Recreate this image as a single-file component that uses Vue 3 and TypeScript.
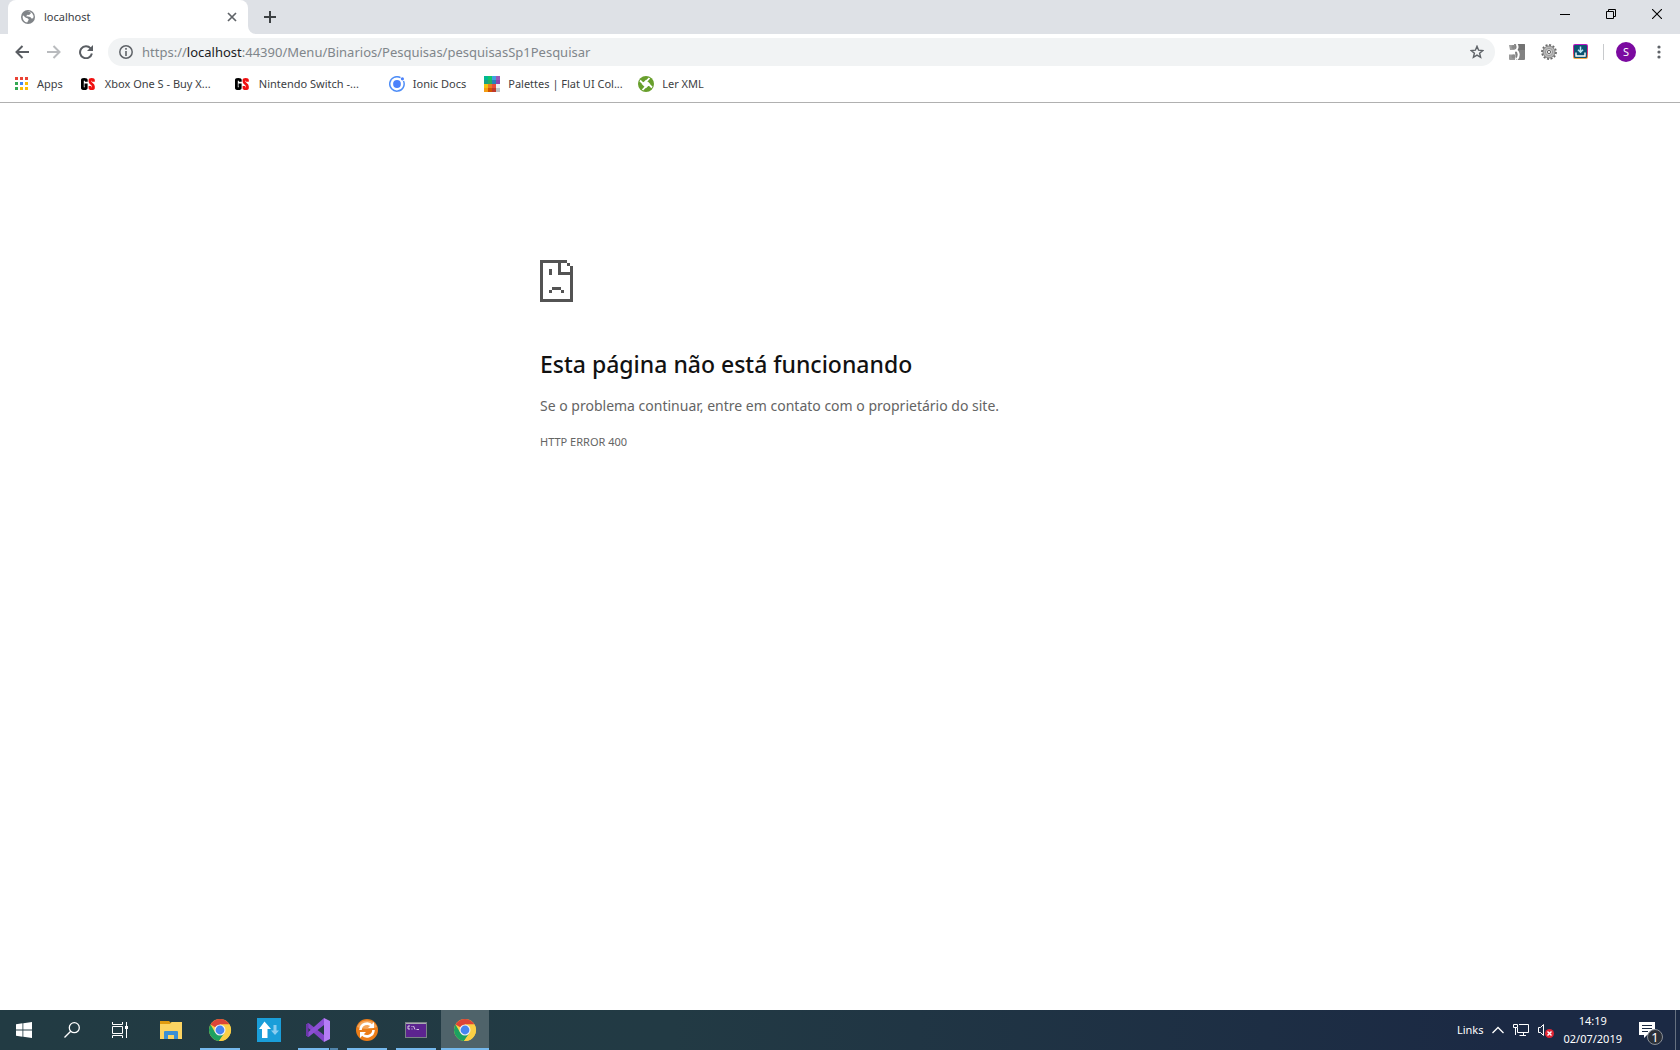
<script setup lang="ts">
interface Bookmark {
  label: string
  icon: 'apps' | 'gs' | 'ionic' | 'palette' | 'xml'
  capped: boolean
}

const bookmarks: Bookmark[] = [
  { label: 'Apps', icon: 'apps', capped: false },
  { label: 'Xbox One S - Buy X...', icon: 'gs', capped: true },
  { label: 'Nintendo Switch -...', icon: 'gs', capped: true },
  { label: 'Ionic Docs', icon: 'ionic', capped: false },
  { label: 'Palettes | Flat UI Col...', icon: 'palette', capped: true },
  { label: 'Ler XML', icon: 'xml', capped: false },
]

const appDots = ['#ea4335', '#ea4335', '#ea4335', '#34a853', '#4285f4', '#fbbc05', '#34a853', '#fbbc05', '#fbbc05']

const paletteCells = [
  '#00b894', '#10c469', '#3fa0e0', '#9b59b6',
  '#16a085', '#27ae60', '#2980b9', '#8e44ad',
  '#f1c40f', '#e67e22', '#e74c3c', '#ecf0f1',
  '#f39c12', '#d35400', '#c0392b', '#bdc3c7',
]
</script>

<template>
  <div class="desktop">
    <header class="browser">
      <div class="tabstrip">
        <div class="tab">
          <svg class="favicon" width="14" height="14" viewBox="0 0 14 14">
            <circle cx="7" cy="7" r="7" fill="#808488" />
            <path d="M2 5.2 4.8 7.800 6.500 8.200 7.800 9.500 6.200 12.600C3.500 12.300 1.700 9.800 1.600 7ZM6 1.600 9.300 1.900 9.800 3.500 8 5 6.500 4.800 5 6.200 7 6.500 9.300 7 10.500 8.600 12.200 8.200 12.600 6 11.200 3.200 8.800 1.500Z" fill="#fff" />
          </svg>
          <span class="tab-title">localhost</span>
          <button class="bare tab-close" aria-label="Fechar guia">
            <svg width="10" height="10" viewBox="0 0 10 10"><path d="M1 1 9 9M9 1 1 9" stroke="#5f6368" stroke-width="1.700" /></svg>
          </button>
          <svg class="tab-foot" width="8" height="8" viewBox="0 0 8 8"><path d="M0 0A8 8 0 0 0 8 8H0Z" fill="#fff" /></svg>
        </div>
        <button class="bare new-tab" aria-label="Nova guia">
          <svg width="12" height="12" viewBox="0 0 12 12"><path d="M6 0V12M0 6H12" stroke="#3c4043" stroke-width="2" /></svg>
        </button>
        <div class="window-controls">
          <button class="bare" aria-label="Minimizar"><svg width="10" height="10" viewBox="0 0 10 10"><path d="M0 5.500H10" stroke="#000" /></svg></button>
          <button class="bare" aria-label="Restaurar"><svg width="10" height="10" viewBox="0 0 10 10" fill="none" stroke="#000"><path d="M.5 2.500H7.500V9.500H.5ZM2.500 2.500V.5H9.500V7.500H7.500" /></svg></button>
          <button class="bare" aria-label="Fechar"><svg width="10" height="10" viewBox="0 0 10 10"><path d="M0 0 10 10M10 0 0 10" stroke="#000" stroke-width="1.100" /></svg></button>
        </div>
      </div>

      <div class="toolbar">
        <nav class="nav">
          <button class="bare" aria-label="Voltar"><svg width="14" height="14" viewBox="0 0 14 14" fill="none" stroke="#5a5e63" stroke-width="2"><path d="M14 7H1.500M7.500 1 1.500 7 7.500 13" /></svg></button>
          <button class="bare" aria-label="Avançar"><svg width="14" height="14" viewBox="0 0 14 14" fill="none" stroke="#b9bbbe" stroke-width="2"><path d="M0 7H12.500M6.500 1 12.500 7 6.500 13" /></svg></button>
          <button class="bare" aria-label="Recarregar"><svg width="14" height="14" viewBox="0 0 14 14"><path d="M11.600 3.300A6 6 0 1 0 12.900 8.600" fill="none" stroke="#5a5e63" stroke-width="2" /><path d="M14 0V6H8Z" fill="#5a5e63" /></svg></button>
        </nav>
        <div class="omnibox">
          <svg width="14" height="14" viewBox="0 0 14 14"><circle cx="7" cy="7" r="6.200" fill="none" stroke="#5f6368" stroke-width="1.500" /><path d="M7 3V4.700M7 6V11" stroke="#5f6368" stroke-width="1.600" /></svg>
          <span class="url">https://<b>localhost</b>:44390/Menu/Binarios/Pesquisas/pesquisasSp1Pesquisar</span>
          <button class="bare" aria-label="Favoritar"><svg width="14" height="14" viewBox="0 0 14 14"><path d="M7 1.300 8.600 5.200 12.800 5.500 9.600 8.200 10.600 12.300 7 10.100 3.400 12.300 4.400 8.200 1.200 5.500 5.400 5.200Z" fill="none" stroke="#5f6368" stroke-width="1.400" /></svg></button>
        </div>
        <div class="extensions">
          <svg width="16" height="16" viewBox="0 0 16 16">
            <path d="M5 0H15Q16 0 16 1V15Q16 16 15 16H7Z" fill="#828282" /><path d="M9 0H15Q16 0 16 1V6H9Z" fill="#727272" />
            <path d="M0 1H6V6H1Z" fill="#a0a0a0" /><path d="M0 10.500H6V16H1Q0 16 0 15Z" fill="#9a9a9a" />
            <path d="M7.500 0C9 2 9 4.500 7 6 10.500 8 10.500 13 7.500 15.500M0 8C3 8.500 5 8 6.500 6.500" fill="none" stroke="#fff" stroke-width="2" />
            <circle cx="4.500" cy="3" r="2" fill="#8a8a8a" /><circle cx="4.500" cy="12.500" r="2" fill="#8a8a8a" />
          </svg>
          <svg width="16" height="16" viewBox="0 0 16 16">
            <circle cx="8" cy="8" r="6.900" fill="none" stroke="#6a6a6a" stroke-width="2" stroke-dasharray="2 1.600" />
            <circle cx="8" cy="8" r="6" fill="#b8b8b8" stroke="#858585" /><circle cx="8" cy="8" r="3.600" fill="#d4d4d4" stroke="#9a9a9a" /><circle cx="8" cy="8" r="1.600" fill="#fff" stroke="#666" />
          </svg>
          <svg width="16" height="16" viewBox="0 0 16 16">
            <defs><linearGradient id="insta" x1="0" y1="0" x2="0" y2="1"><stop offset="0" stop-color="#b414c8" /><stop offset=".6" stop-color="#e03a70" /><stop offset="1" stop-color="#fbb03b" /></linearGradient></defs>
            <rect width="15" height="15" rx="2" fill="url(#insta)" /><rect x="1" y="1" width="13" height="13" rx="1" fill="#0c5272" />
            <path d="M3 8.500V12H12V8.500" fill="none" stroke="#fff" stroke-width="1.400" /><path d="M7.500 2.500V8M5 5.800 7.500 8.300 10 5.800" fill="none" stroke="#b9e6f5" stroke-width="1.500" />
          </svg>
        </div>
        <span class="divider"></span>
        <button class="bare avatar" aria-label="Perfil">S</button>
        <button class="bare menu" aria-label="Menu"><svg width="4" height="14" viewBox="0 0 4 14" fill="#5f6368"><circle cx="2" cy="2" r="1.600" /><circle cx="2" cy="7" r="1.600" /><circle cx="2" cy="12" r="1.600" /></svg></button>
      </div>

      <nav class="bookmarks">
        <a v-for="mark in bookmarks" :key="mark.label" href="#" class="bookmark" :class="{ capped: mark.capped }">
          <svg v-if="mark.icon === 'apps'" width="14" height="14" viewBox="0 0 14 14">
            <rect v-for="(color, i) in appDots" :key="i" :x="(i % 3) * 5" :y="Math.floor(i / 3) * 5" width="3" height="3" :fill="color" />
          </svg>
          <svg v-else-if="mark.icon === 'gs'" width="16" height="16" viewBox="0 0 16 16" fill="none" stroke-width="2.800">
            <path d="M5.300 5.800V4Q5.300 3.300 3.300 3.300T1.400 4V12Q1.400 12.700 3.300 12.700T5.200 12V9H3.500" stroke="#000" />
            <path d="M12.400 5.800V4Q12.400 3.300 10.700 3.300T9 4V5.500C9 8 12.400 7.800 12.400 10.400V12Q12.400 12.700 10.700 12.700T9 12V10" stroke="#f01010" />
          </svg>
          <svg v-else-if="mark.icon === 'ionic'" width="16" height="16" viewBox="0 0 16 16">
            <path d="M11.500 1.700A7.200 7.200 0 1 0 14.500 5" fill="none" stroke="#4f8ef7" stroke-width="1.500" /><circle cx="8" cy="8" r="3.900" fill="#4c82fb" /><circle cx="13.400" cy="2.800" r="1.600" fill="#4c82fb" />
          </svg>
          <svg v-else-if="mark.icon === 'palette'" width="16" height="16" viewBox="0 0 16 16" shape-rendering="crispEdges">
            <rect v-for="(color, i) in paletteCells" :key="i" :x="(i % 4) * 4" :y="Math.floor(i / 4) * 4" width="4" height="4" :fill="color" />
          </svg>
          <svg v-else width="16" height="16" viewBox="0 0 16 16">
            <circle cx="8" cy="8" r="8" fill="#689f2c" />
            <path d="M8 5 11 8 8 11 5 8ZM2 4.500 5 7.500M8.500 5.200 11.500 2M11 8.500 14 11.500M7.500 10.800 4.500 14" fill="#fff" stroke="#fff" stroke-width="1.800" />
          </svg>
          <span>{{ mark.label }}</span>
        </a>
      </nav>
    </header>

    <main class="page">
      <div class="error">
        <svg width="33" height="42" viewBox="0 0 11 14" shape-rendering="crispEdges" fill="#535353">
          <path d="M0 0H9V1H7V4H10V2H11V14H0ZM1 1V13H10V5H6V1ZM9 1H10V2H9ZM3 3H4V5H3ZM4 9H7V10H4ZM3 10H4V11H3ZM7 10H8V11H7Z" fill-rule="evenodd" />
        </svg>
        <h1>Esta página não está funcionando</h1>
        <p>Se o problema continuar, entre em contato com o proprietário do site.</p>
        <div class="code">HTTP ERROR 400</div>
      </div>
    </main>

    <footer class="taskbar">
      <div class="system">
        <button class="bare task" aria-label="Iniciar"><svg width="16" height="16" viewBox="0 0 16 16" fill="#fff"><path d="M0 2.200 6.500 1.300V7.500H0ZM7.300 1.200 16 0V7.500H7.300ZM0 8.400H6.500V14.700L0 13.800ZM7.300 8.400H16V16L7.300 14.800Z" /></svg></button>
        <button class="bare task" aria-label="Pesquisar"><svg width="16" height="16" viewBox="0 0 16 16" fill="none" stroke="#fff" stroke-width="1.300"><circle cx="10.300" cy="5.700" r="5" /><path d="M6.700 9.300.5 15.500" /></svg></button>
        <button class="bare task" aria-label="Visão de tarefas"><svg width="16" height="16" viewBox="0 0 16 16" fill="none" stroke="#fff"><path d="M.5 4.500H10.500V11.500H.5ZM.5 0V2.500H10.500V0M.5 16V13.500H10.500V16M14.500 0V16" /><path d="M13 4H16V7H13Z" fill="#fff" stroke="none" /></svg></button>
      </div>
      <div class="apps-list">
        <button class="bare task" aria-label="Explorador de Arquivos">
          <svg width="24" height="24" viewBox="0 0 24 24"><path d="M1 3H10L12 5H22V8H1Z" fill="#e09b10" /><path d="M1 6H11L12.500 4H23V21H1Z" fill="#fcd462" /><path d="M5 21V14Q5 13 6 13H18Q19 13 19 14V21H15V17H9V21Z" fill="#3b8fd4" /></svg>
        </button>
        <button class="bare task running" aria-label="Google Chrome">
          <svg width="24" height="24" viewBox="0 0 48 48"><circle cx="24" cy="24" r="22" fill="#fbcf45" /><path d="M24 24 5 13A22 22 0 0 1 43 13H24Z" fill="#dc4437" /><path d="M5 13A22 22 0 0 0 22 46L33.500 29.500 24 24 14.500 29.500Z" fill="#1da160" /><path d="M24 13H43A22 22 0 0 1 22 46L33.500 29.500Z" fill="#fbcf45" /><circle cx="24" cy="24" r="11" fill="#f1f1f1" /><circle cx="24" cy="24" r="8.800" fill="#4684f0" /></svg>
        </button>
        <button class="bare task" aria-label="Sincronizador">
          <svg width="24" height="24" viewBox="0 0 24 24"><path d="M0 0H24V24H0Z" fill="#1a9ed9" /><path d="M7.500 3.500 14 11H10.500V20H5V11H2Z" fill="#fff" /><path d="M16.500 7H19.500V12.500H22L18 17 14 12.500H16.500Z" fill="#8bcdf0" /></svg>
        </button>
        <button class="bare task running grouped" aria-label="Visual Studio">
          <svg width="24" height="24" viewBox="0 0 24 24"><path d="M0 6.500 2.500 5 18 17V24L0 8Z" fill="#8246c8" /><path d="M0 17.500 2.500 19 18 7V0L0 16Z" fill="#8c4fd5" /><path d="M0 6.500 2.500 5V19L0 17.500Z" fill="#6b36aa" /><path d="M18 0 24 3V21L18 24Z" fill="#b57df5" /></svg>
        </button>
        <button class="bare task running" aria-label="Atualizador">
          <svg width="24" height="24" viewBox="0 0 24 24"><circle cx="12" cy="12" r="11" fill="#ec7d18" /><path d="M2 9A11 11 0 0 1 22 9Q12 13 2 9Z" fill="#f5a55a" /><path d="M5.500 12A6.500 6.500 0 0 1 17 8M18.500 12A6.500 6.500 0 0 1 7 16" fill="none" stroke="#fff" stroke-width="2.600" /><path d="M19 4V10H13ZM5 20V14H11Z" fill="#fff" /></svg>
        </button>
        <button class="bare task running" aria-label="Prompt de comando">
          <svg width="24" height="24" viewBox="0 0 24 24"><rect x="1.500" y="4.500" width="21" height="15" fill="#5c2490" stroke="#7b8388" /><path d="M2 5.500H22" stroke="#a9adb1" /><path d="M6 8H4V11H6M8 8V9M8 10.500V11.500M9.500 8 11 11.500M12.500 11.500H15" fill="none" stroke="#e6dff0" stroke-width=".9" /></svg>
        </button>
        <button class="bare task running active" aria-label="localhost - Google Chrome">
          <svg width="24" height="24" viewBox="0 0 48 48"><circle cx="24" cy="24" r="22" fill="#fbcf45" /><path d="M24 24 5 13A22 22 0 0 1 43 13H24Z" fill="#dc4437" /><path d="M5 13A22 22 0 0 0 22 46L33.500 29.500 24 24 14.500 29.500Z" fill="#1da160" /><path d="M24 13H43A22 22 0 0 1 22 46L33.500 29.500Z" fill="#fbcf45" /><circle cx="24" cy="24" r="11" fill="#f1f1f1" /><circle cx="24" cy="24" r="8.800" fill="#4684f0" /></svg>
        </button>
      </div>
      <div class="tray">
        <div class="status">
          <span>Links</span>
          <button class="bare" aria-label="Ícones ocultos"><svg width="14" height="8" viewBox="0 0 14 8"><path d="M1.500 7 7 1.500 12.500 7" fill="none" stroke="#fff" stroke-width="1.300" /></svg></button>
          <svg width="16" height="16" viewBox="0 0 16 16" fill="none" stroke="#fff"><path d="M6 2.500H15.500V10.500H4.500V6M10.500 10.500V13.500M6.500 13.500H13" /><path d="M.5 2.500H4.500V5.500H.5ZM2.500 5.500V13" /></svg>
          <svg width="18" height="16" viewBox="0 0 18 16"><path d="M1.500 5.500H3.500L6.500 2.500V13.500L3.500 10.500H1.500Z" fill="none" stroke="#fff" /><circle cx="12.500" cy="11.500" r="4.500" fill="#e02434" /><path d="M10.500 9.500 14.500 13.500M14.500 9.500 10.500 13.500" stroke="#fff" stroke-width="1.400" /></svg>
          <div class="clock"><time>14:19</time><time>02/07/2019</time></div>
        </div>
        <button class="bare notice" aria-label="Notificações">
          <svg width="16" height="16" viewBox="0 0 16 16"><path d="M0 0H16V13H8L5 16V13H0Z" fill="#fff" /><path d="M3 3.500H13M3 6.500H13M3 9.500H9" stroke="#1b2a42" /></svg>
          <span class="badge">1</span>
        </button>
      </div>
    </footer>
  </div>
</template>

<style>
body {
  margin: 0;
}
</style>

<style scoped>
.desktop {
  min-height: 100vh;
  display: flex;
  flex-direction: column;
  background: #fff;
  font-family: "Noto Sans", "Open Sans", sans-serif;
  font-size: 11px;
  line-height: 16px;
  color: #3c4043;
}

svg {
  display: block;
  flex: none;
}

.bare {
  display: flex;
  align-items: center;
  justify-content: center;
  margin: 0;
  padding: 0;
  border: 0;
  background: none;
  color: inherit;
  font: inherit;
}

.browser {
  border-bottom: 1px solid #b0b0b0;
}

.tabstrip {
  display: flex;
  height: 34px;
  padding-left: 8px;
  background: #dee1e6;
}

.tab {
  position: relative;
  display: flex;
  align-items: center;
  box-sizing: border-box;
  width: 240px;
  padding: 0 11px 0 13px;
  border-radius: 8px 8px 0 0;
  background: #fff;
}

.tab-title {
  flex: 1;
  margin-left: 9px;
}

.tab-foot {
  position: absolute;
  left: 100%;
  bottom: 0;
}

.new-tab {
  width: 28px;
  margin-left: 8px;
}

.window-controls {
  display: flex;
  height: 28px;
  margin-left: auto;
}

.window-controls .bare {
  width: 46px;
}

.toolbar {
  display: flex;
  align-items: center;
  padding: 4px 11px 4px 6px;
}

.nav {
  display: flex;
  margin-right: 6px;
}

.nav .bare {
  width: 32px;
}

.omnibox {
  display: flex;
  flex: 1;
  align-items: center;
  height: 28px;
  padding: 0 11px;
  border-radius: 14px;
  background: #f1f3f4;
}

.url {
  flex: 1;
  margin-left: 9px;
  font-size: 13px;
  color: #80868b;
}

.url b {
  font-weight: 400;
  color: #202124;
}

.extensions {
  display: flex;
  gap: 16px;
  margin-left: 14px;
}

.divider {
  width: 1px;
  height: 16px;
  margin: 0 12px 0 14px;
  background: #c8cacd;
}

.avatar {
  width: 20px;
  height: 20px;
  border-radius: 10px;
  background: #7b0aa0;
  color: #fff;
}

.menu {
  width: 20px;
  margin-left: 13px;
}

.bookmarks {
  display: flex;
  height: 28px;
  padding: 0 0 4px 15px;
}

.bookmark {
  display: flex;
  gap: 8px;
  align-items: center;
  margin-right: 18px;
  color: inherit;
  text-decoration: none;
  white-space: nowrap;
}

.bookmark.capped {
  width: 154px;
  margin-right: 0;
}

.page {
  flex: 1;
  padding: 157px 24px 0;
}

.error {
  max-width: 600px;
  margin: 0 auto;
  color: #646464;
}

h1 {
  margin: 46px 0 16px;
  font-size: 23px;
  font-weight: 500;
  line-height: 32px;
  color: #111;
}

p {
  margin: 0;
  font-size: 14px;
  line-height: 20px;
}

.code {
  margin-top: 18px;
}

.taskbar {
  display: flex;
  height: 40px;
  background: linear-gradient(90deg, #223b43, #223a44 40%, #1b2944 90%);
  color: #fff;
}

.system,
.apps-list {
  display: flex;
}

.system {
  margin-right: 3px;
}

.apps-list {
  gap: 1px;
}

.task {
  position: relative;
  width: 48px;
}

.running::after {
  content: "";
  position: absolute;
  right: 4px;
  bottom: 0;
  left: 4px;
  height: 2px;
  background: #76b9ed;
}

.grouped::after {
  background: linear-gradient(90deg, #76b9ed 31px, #223b43 31px, #223b43 32px, #5286ac 32px);
}

.active {
  background: #4f636a;
}

.active::after {
  right: 0;
  left: 0;
}

.tray {
  display: flex;
  margin-left: auto;
  padding-right: 4px;
}

.status {
  display: flex;
  align-items: center;
  gap: 8px;
}

.clock {
  display: flex;
  flex-direction: column;
  align-items: center;
}

.clock time {
  line-height: 18px;
}

.notice {
  position: relative;
  box-sizing: border-box;
  width: 54px;
  padding-right: 3px;
  border-right: 1px solid #66707f;
}

.badge {
  position: absolute;
  top: 19px;
  left: 25px;
  width: 14px;
  border: 1px solid #8a8f98;
  border-radius: 8px;
  background: #2b3038;
  font-size: 13px;
  line-height: 14px;
}
</style>
